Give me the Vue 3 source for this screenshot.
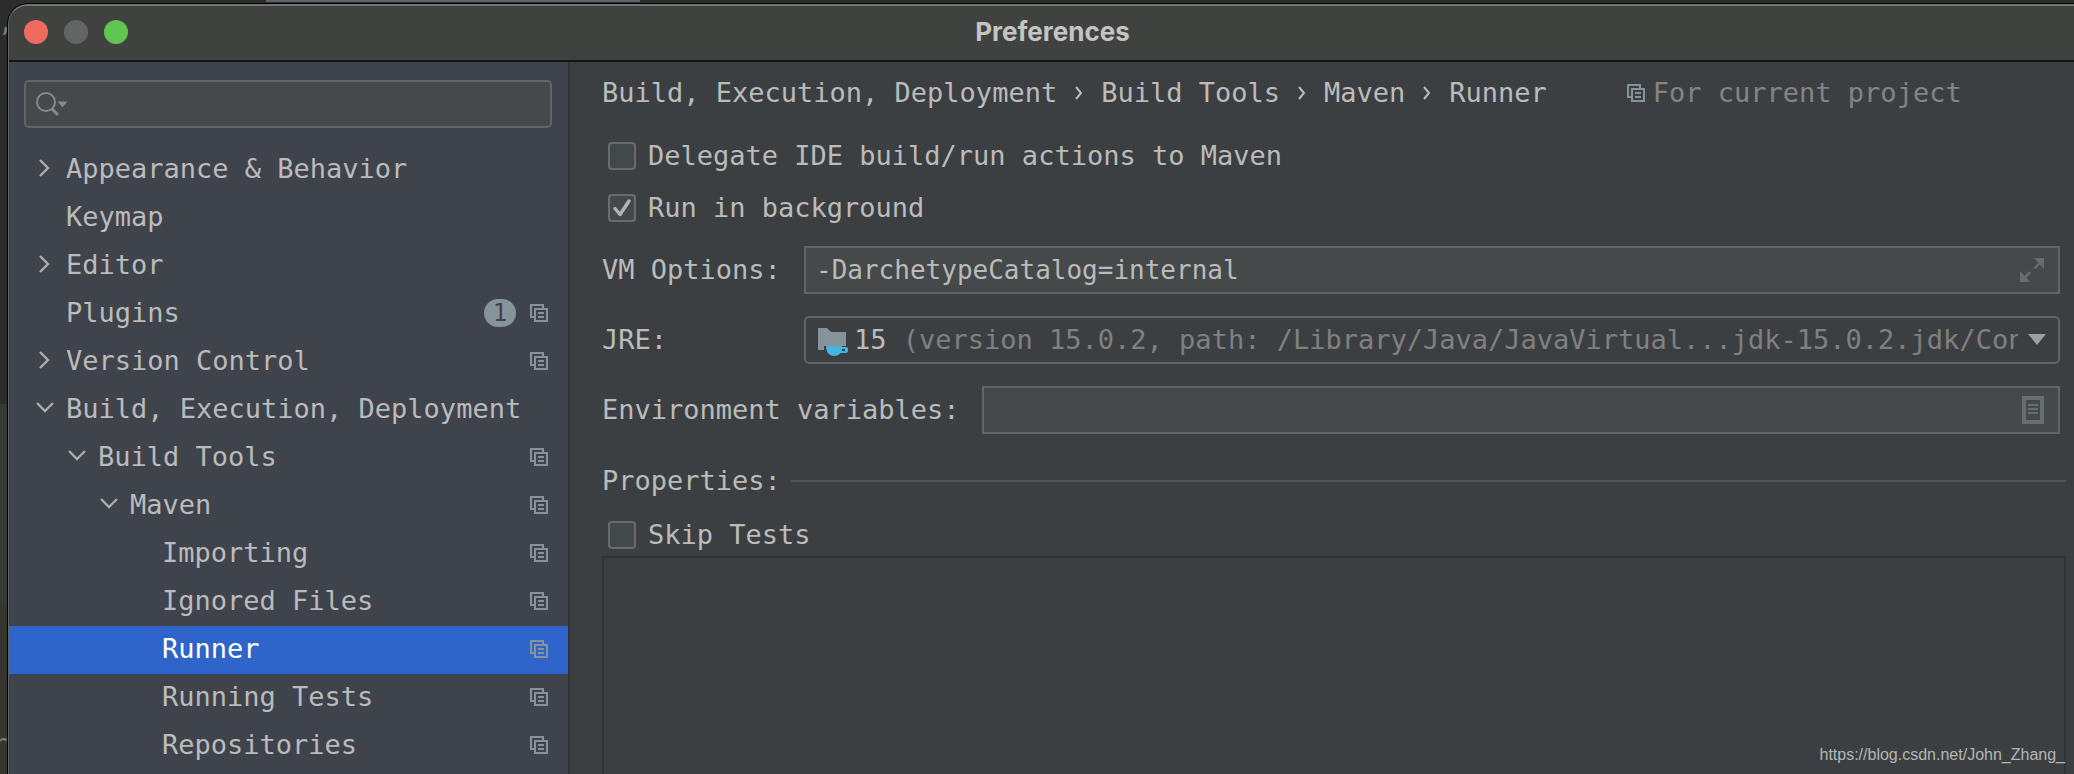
<script setup>
import { ref } from 'vue'

const tree = [
  { label: 'Appearance & Behavior', level: 0, arrow: 'right' },
  { label: 'Keymap', level: 0 },
  { label: 'Editor', level: 0, arrow: 'right' },
  { label: 'Plugins', level: 0, badge: 1, project: true },
  { label: 'Version Control', level: 0, arrow: 'right', project: true },
  { label: 'Build, Execution, Deployment', level: 0, arrow: 'down' },
  { label: 'Build Tools', level: 1, arrow: 'down', project: true },
  { label: 'Maven', level: 2, arrow: 'down', project: true },
  { label: 'Importing', level: 3, project: true },
  { label: 'Ignored Files', level: 3, project: true },
  { label: 'Runner', level: 3, project: true },
  { label: 'Running Tests', level: 3, project: true },
  { label: 'Repositories', level: 3, project: true },
]
const crumbs = ['Build, Execution, Deployment', 'Build Tools', 'Maven', 'Runner']

const selected = ref('Runner')
const search = ref('')
const delegate = ref(false)
const background = ref(true)
const skipTests = ref(false)
const vmOptions = ref('-DarchetypeCatalog=internal')
const envVars = ref('')
const jre = ref('15')
</script>

<template>
  <div class="desktop">
    <div class="editor-tab"></div>
    <div class="gutter" aria-hidden="true">
      <span class="gutter-text">),</span>
      <span class="gutter-block added"></span>
      <span class="gutter-block changed">r</span>
    </div>

    <div class="window">
      <header class="titlebar">
        <div class="lights">
          <button class="light close" type="button" aria-label="Close"></button>
          <button class="light minimize" type="button" aria-label="Minimize" disabled></button>
          <button class="light maximize" type="button" aria-label="Zoom"></button>
        </div>
        <h1 class="title">Preferences</h1>
      </header>

      <div class="body">
        <aside class="sidebar">
          <div class="search">
            <svg class="search-icon" width="34" height="26" viewBox="0 0 34 26" aria-hidden="true">
              <circle cx="10" cy="11" r="9" fill="none" stroke="#7f8b91" stroke-width="2" />
              <path d="M15.500 17.500L22 24" stroke="#7f8b91" stroke-width="3" />
              <path d="M21.500 10.500h10l-5 6z" fill="#7f8b91" />
            </svg>
            <input v-model="search" class="search-input" type="text" aria-label="Search settings" />
          </div>
          <nav class="tree" aria-label="Settings">
            <button
              v-for="item in tree"
              :key="item.label"
              type="button"
              class="row"
              :class="['level-' + item.level, { selected: selected === item.label }]"
              @click="selected = item.label"
            >
              <span class="arrow">
                <svg v-if="item.arrow === 'right'" width="20" height="20" viewBox="0 0 20 20">
                  <path d="M5 1l8 8-8 8" fill="none" stroke="#adadad" stroke-width="2.400" />
                </svg>
                <svg v-else-if="item.arrow === 'down'" width="20" height="20" viewBox="0 0 20 20">
                  <path d="M2 4l8 8 8-8" fill="none" stroke="#adadad" stroke-width="2.400" />
                </svg>
              </span>
              <span class="row-label">{{ item.label }}</span>
              <span v-if="item.badge" class="badge">{{ item.badge }}</span>
              <svg v-if="item.project" class="copy-icon" width="18" height="18" viewBox="0 0 18 18">
                <path d="M4 13H1V1h12v3" fill="none" stroke="currentColor" stroke-width="2" />
                <path d="M5 5h12v12H5zM8 9h6M8 13h6" fill="none" stroke="currentColor" stroke-width="2" />
              </svg>
            </button>
          </nav>
        </aside>

        <main class="content">
          <div class="crumbs">
            <template v-for="(crumb, i) in crumbs" :key="crumb">
              <svg v-if="i" class="crumb-sep" width="8" height="14" viewBox="0 0 8 14" aria-hidden="true">
                <path d="M1 1l5 6-5 6" fill="none" stroke="#bbbbbb" stroke-width="2" />
              </svg>
              <span>{{ crumb }}</span>
            </template>
            <span class="scope">
              <svg class="copy-icon" width="18" height="18" viewBox="0 0 18 18" aria-hidden="true">
                <path d="M4 13H1V1h12v3" fill="none" stroke="currentColor" stroke-width="2" />
                <path d="M5 5h12v12H5zM8 9h6M8 13h6" fill="none" stroke="currentColor" stroke-width="2" />
              </svg>
              <span>For current project</span>
            </span>
          </div>

          <label class="check-row">
            <input v-model="delegate" class="checkbox" type="checkbox" />
            <span>Delegate IDE build/run actions to Maven</span>
          </label>
          <label class="check-row">
            <span class="check-wrap">
              <input v-model="background" class="checkbox" type="checkbox" />
              <svg v-if="background" class="tick" width="28" height="28" viewBox="0 0 28 28" aria-hidden="true">
                <path d="M7 14.500l5 6L21 7" fill="none" stroke="#b0b3b3" stroke-width="3.500" stroke-linecap="round" stroke-linejoin="round" />
              </svg>
            </span>
            <span>Run in background</span>
          </label>

          <div class="fields">
            <div class="field">
              <label class="field-label" for="vm">VM Options:</label>
              <div class="box">
                <input id="vm" v-model="vmOptions" class="box-input" type="text" />
                <button class="box-button" type="button" aria-label="Expand">
                  <svg width="24" height="24" viewBox="0 0 24 24">
                    <path d="M14 0h10v11zM0 13v11h10z" fill="#646e73" />
                    <path d="M21 3.500l-6.500 7M3.500 21l6.500-7" stroke="#646e73" stroke-width="2.500" />
                  </svg>
                </button>
              </div>
            </div>

            <div class="field">
              <label class="field-label" for="jre">JRE:</label>
              <div class="box combo">
                <svg class="jdk-icon" width="32" height="32" viewBox="0 0 32 32" aria-hidden="true">
                  <path d="M2 4h9l4 4h15v14H8v4H2z" fill="#87939a" />
                  <path d="M10 22h16v1h4a2 2 0 0 1 2 2v2a2 2 0 0 1-2 2h-5.500C23 31 20.500 32 18 32c-4.500 0-8-3.500-8-10zM26 25v2h3v-2z" fill="#40b6e0" fill-rule="evenodd" />
                </svg>
                <span class="combo-text"><span class="jre-name">15</span> (version 15.0.2, path: /Library/Java/JavaVirtual...jdk-15.0.2.jdk/Contents/Home)</span>
                <svg class="combo-arrow" width="18" height="12" viewBox="0 0 18 12" aria-hidden="true">
                  <path d="M0 0h18L9 11z" fill="#9b9fa2" />
                </svg>
                <select id="jre" v-model="jre" class="combo-select">
                  <option value="15">15</option>
                </select>
              </div>
            </div>

            <div class="field">
              <label class="field-label wide" for="env">Environment variables:</label>
              <div class="box">
                <input id="env" v-model="envVars" class="box-input" type="text" />
                <button class="box-button" type="button" aria-label="Edit variables">
                  <svg width="22" height="28" viewBox="0 0 22 28">
                    <path d="M2 2h18v24H2z" fill="none" stroke="#646e73" stroke-width="4" />
                    <path d="M6 9h10M6 13h10M6 17h10" stroke="#646e73" stroke-width="2" />
                  </svg>
                </button>
              </div>
            </div>
          </div>

          <h2 class="section">
            <span>Properties:</span>
            <span class="rule"></span>
          </h2>
          <label class="check-row last">
            <input v-model="skipTests" class="checkbox" type="checkbox" />
            <span>Skip Tests</span>
          </label>
          <div class="table-area"></div>
        </main>
      </div>
    </div>
    <a class="watermark" href="#">https://blog.csdn.net/John_Zhang_</a>
  </div>
</template>

<style>
body {
  margin: 0;
  background: #2b2b2b;
}
</style>

<style scoped>
* {
  box-sizing: border-box;
}
.desktop {
  position: relative;
  height: 100vh;
  padding: 4px 0 0 8px;
  overflow: hidden;
  background: #2c2c2d;
  color: #bbbbbb;
  font-family: "DejaVu Sans Mono", "Liberation Mono", monospace;
  font-size: 27px;
  line-height: 32px;
}
button,
input,
select {
  margin: 0;
  padding: 0;
  border: 0;
  background: none;
  color: inherit;
  font: inherit;
  outline: none;
}
.editor-tab {
  position: absolute;
  top: 0;
  left: 266px;
  width: 374px;
  height: 2px;
  background: #5d636d;
}
.gutter {
  position: absolute;
  inset: 0 auto 0 0;
  display: flex;
  flex-direction: column;
  width: 8px;
  overflow: hidden;
  color: #77797a;
}
.gutter-text {
  display: flex;
  justify-content: flex-end;
  height: 404px;
  margin-right: -6px;
  padding-top: 6px;
}
.gutter-block {
  display: flex;
  justify-content: flex-end;
  height: 200px;
  background: #343b33;
}
.gutter-block.changed {
  flex: 1;
  padding-top: 124px;
  background: #38342e;
}
.window {
  position: relative;
  display: flex;
  flex-direction: column;
  height: 100%;
  margin-right: -22px;
  border-top: 2px solid #737573;
  border-left: 1px solid #5f646b;
  border-top-left-radius: 20px;
  background: #3c3f41;
  box-shadow: 0 0 0 1px #000000;
  overflow: hidden;
}
.titlebar {
  display: grid;
  grid-template-columns: 1fr auto 1fr;
  align-items: center;
  height: 56px;
  padding: 0 15px 3px;
  flex: none;
  border-bottom: 2px solid #131414;
  background: #404240;
}
.lights {
  display: flex;
  gap: 16px;
}
.light {
  width: 24px;
  height: 24px;
  border-radius: 50%;
}
.close {
  background: #ed6a5e;
}
.minimize {
  background: #636564;
}
.maximize {
  background: #61c554;
}
.title {
  margin: 0;
  color: #c3c4c3;
  font-family: Inter, "Liberation Sans", sans-serif;
  font-size: 26px;
  font-weight: 700;
  line-height: 32px;
}
.body {
  display: flex;
  flex: 1;
  min-height: 0;
}
.sidebar {
  width: 561px;
  flex: none;
  padding-top: 18px;
  border-right: 2px solid #323435;
  background: #3f434c;
  overflow: hidden;
}
.search {
  display: flex;
  align-items: center;
  gap: 8px;
  height: 48px;
  margin: 0 16px 18px 15px;
  padding: 0 10px;
  border: 2px solid #646464;
  border-radius: 5px;
  background: #45494a;
}
.search-input {
  flex: 1;
  min-width: 0;
}
.row {
  display: flex;
  align-items: center;
  width: 100%;
  height: 48px;
  padding-right: 20px;
  padding-bottom: 2px;
  padding-left: 26px;
  text-align: left;
  white-space: nowrap;
}
.level-1 {
  padding-left: 58px;
}
.level-2 {
  padding-left: 90px;
}
.level-3 {
  padding-left: 122px;
}
.arrow {
  display: flex;
  width: 31px;
  flex: none;
}
.row-label {
  flex: 1;
}
.badge {
  width: 32px;
  height: 28px;
  margin-right: 14px;
  border-radius: 14px;
  background: #87939a;
  color: #3f434c;
  font-size: 24px;
  line-height: 28px;
  text-align: center;
}
.copy-icon {
  flex: none;
  color: #87939a;
}
.selected {
  background: #2f65ca;
  color: #ffffff;
}
.content {
  display: flex;
  flex: 1;
  flex-direction: column;
  min-width: 0;
  padding: 15px 30px 0 32px;
}
.crumbs {
  display: flex;
  align-items: center;
  gap: 18px;
  height: 32px;
  margin-bottom: 21px;
  white-space: nowrap;
}
.scope {
  display: flex;
  align-items: center;
  gap: 8px;
  margin-left: 62px;
  color: #848484;
}
.check-row {
  display: flex;
  align-items: center;
  gap: 12px;
  height: 52px;
  padding-left: 6px;
}
.check-wrap {
  position: relative;
  display: flex;
}
.checkbox {
  width: 28px;
  height: 28px;
  flex: none;
  border: 2px solid #6b6b6b;
  border-radius: 4px;
  background: #43494a;
  appearance: none;
}
.tick {
  position: absolute;
  inset: 0;
  pointer-events: none;
}
.fields {
  display: flex;
  flex-direction: column;
  gap: 22px;
  margin: 12px 6px 0 0;
}
.field {
  display: flex;
  align-items: center;
}
.field-label {
  width: 202px;
  flex: none;
  white-space: nowrap;
}
.field-label.wide {
  width: 380px;
}
.box {
  position: relative;
  display: flex;
  align-items: center;
  flex: 1;
  min-width: 0;
  height: 48px;
  padding: 0 14px 0 10px;
  border: 2px solid #646464;
  background: #45494a;
}
.box-input {
  flex: 1;
  min-width: 0;
  font-size: 26px;
}
.box-button {
  display: flex;
}
.combo {
  padding: 0 12px 0 10px;
  border-radius: 5px;
  background: #3c3f41;
}
.jdk-icon {
  flex: none;
}
.combo-text {
  flex: 1;
  min-width: 0;
  margin: 0 10px 0 6px;
  overflow: hidden;
  color: #808080;
  white-space: nowrap;
}
.jre-name {
  color: #bbbbbb;
}
.combo-arrow {
  flex: none;
}
.combo-select {
  position: absolute;
  inset: 0;
  width: 100%;
  opacity: 0;
}
.section {
  display: flex;
  align-items: center;
  gap: 10px;
  margin: 31px 0 11px;
  font-size: 27px;
  font-weight: 400;
  line-height: 32px;
}
.rule {
  flex: 1;
  height: 2px;
  background: #515355;
}
.check-row.last {
  height: 48px;
  padding-top: 6px;
}
.table-area {
  flex: 1;
  border: 2px solid #323232;
  border-bottom: 0;
}
.watermark {
  position: absolute;
  right: 9px;
  bottom: 8px;
  color: #b5b6b7;
  font-family: "Liberation Sans", Arial, sans-serif;
  font-size: 16px;
  line-height: 22px;
  text-decoration: none;
}
</style>
